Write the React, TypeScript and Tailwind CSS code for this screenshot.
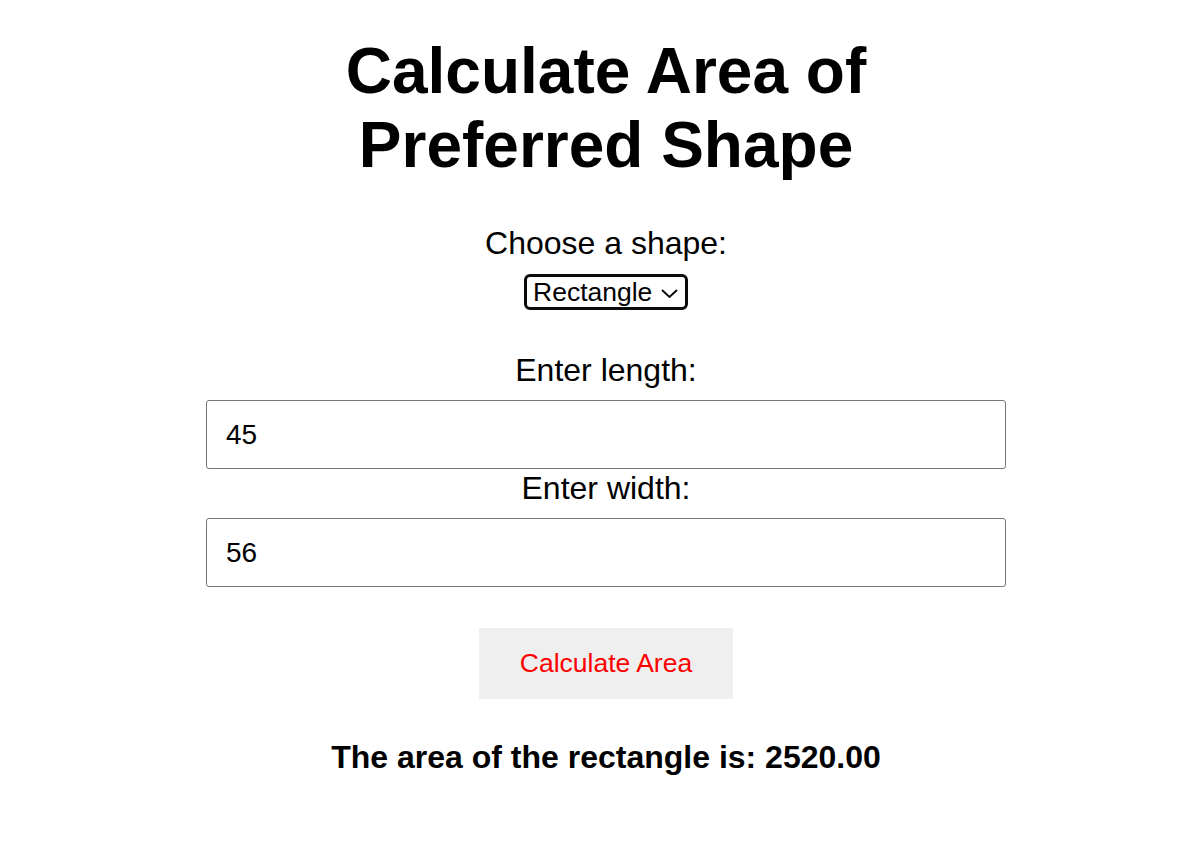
import { useState } from 'react';

export default function App() {
  const [shape, setShape] = useState('rectangle');
  const [length, setLength] = useState('45');
  const [width, setWidth] = useState('56');
  const [result, setResult] = useState('The area of the rectangle is: 2520.00');

  const calculate = () => {
    const a = parseFloat(length) * parseFloat(width);
    setResult(`The area of the ${shape} is: ${a.toFixed(2)}`);
  };

  return (
    <div
      className="min-h-screen bg-white text-black pt-[34px] pl-[18px]"
      style={{ fontFamily: '"Liberation Sans", Arial, sans-serif' }}
    >
      <div className="w-[800px] mx-auto flex flex-col items-center text-center">
        {/* Title */}
        <h1 className="text-[64px] leading-[74px] font-bold">
          Calculate Area of
          <br />
          Preferred Shape
        </h1>

        {/* Shape picker */}
        <label className="mt-[43px] text-[32px] leading-[37px]">Choose a shape:</label>
        <div className="relative mt-[12px] w-[164px] h-[36px]">
          <select
            value={shape}
            onChange={(e) => setShape(e.target.value)}
            className="appearance-none w-full h-full border-[3px] border-[#0a0a0a] rounded-[6px] bg-white pl-[6px] pr-[30px] text-[26.5px] leading-[30px] text-left outline-none"
          >
            <option value="rectangle">Rectangle</option>
            <option value="circle">Circle</option>
            <option value="triangle">Triangle</option>
          </select>
          <svg
            className="absolute right-[10px] top-[15px] pointer-events-none"
            width="17"
            height="9"
            viewBox="0 0 17 9"
            fill="none"
          >
            <path d="M1 1 L8.5 8 L16 1" stroke="#000" strokeWidth="1.8" />
          </svg>
        </div>

        {/* Inputs */}
        <label className="mt-[42px] text-[32px] leading-[37px]">Enter length:</label>
        <input
          type="text"
          value={length}
          onChange={(e) => setLength(e.target.value)}
          className="mt-[11px] w-full h-[69px] border border-[#767676] rounded-[3px] pl-[19px] text-[28px] outline-none"
        />
        <label className="mt-[1px] text-[32px] leading-[37px]">Enter width:</label>
        <input
          type="text"
          value={width}
          onChange={(e) => setWidth(e.target.value)}
          className="mt-[11px] w-full h-[69px] border border-[#767676] rounded-[3px] pl-[19px] text-[28px] outline-none"
        />

        {/* Action */}
        <button
          onClick={calculate}
          className="mt-[41px] w-[254px] h-[71px] bg-[#efefef] text-[#ff0000] text-[26.5px] flex items-center justify-center"
        >
          Calculate Area
        </button>

        <p className="mt-[40px] text-[32px] leading-[37px] font-bold">{result}</p>
      </div>
    </div>
  );
}
